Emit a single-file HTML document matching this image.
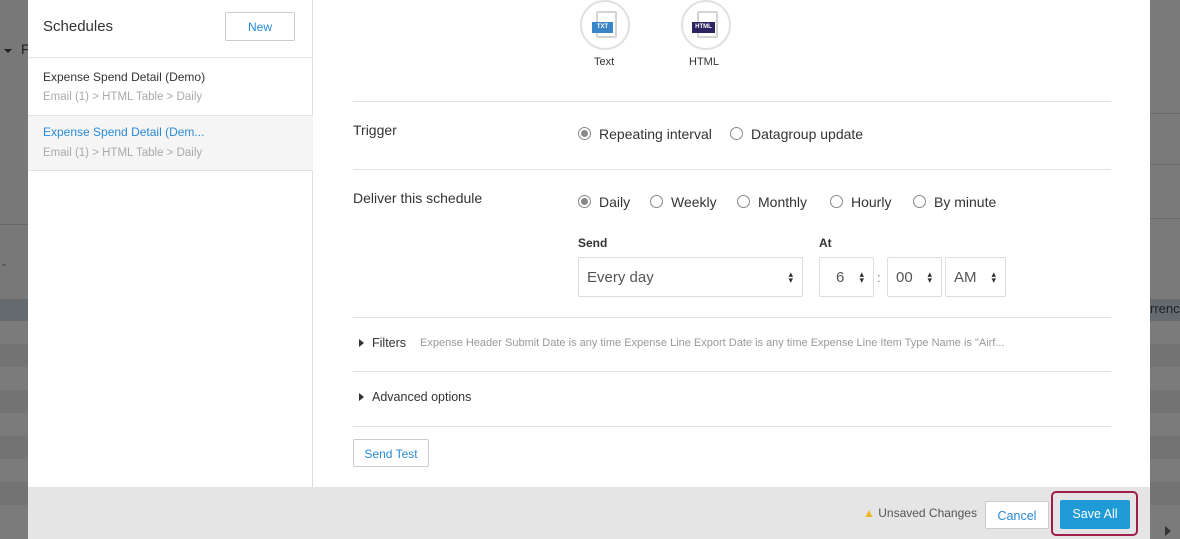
<!DOCTYPE html>
<html><head><style>
*{box-sizing:border-box;margin:0;padding:0}
body{width:1180px;height:539px;overflow:hidden;position:relative;background:#7a7a7a;font-family:"Liberation Sans",sans-serif;color:#333}
.abs{position:absolute}
.row{position:absolute;height:23px;width:1180px;left:0}
.modal{position:absolute;left:28px;top:0;width:1122px;height:539px;background:#fff}
.left{position:absolute;left:0;top:0;width:285px;height:487px;border-right:1px solid #ddd}
.foot{position:absolute;left:0;top:487px;width:1122px;height:52px;background:#e5e5e5}
.hr{position:absolute;left:325px;width:758px;height:1px;background:#e2e2e2}
.radio{position:absolute;width:13px;height:13px;border:1px solid #888;border-radius:50%;background:#fff}
.radio.on:after{content:"";position:absolute;left:2px;top:2px;width:7px;height:7px;border-radius:50%;background:#888}
.lbl{position:absolute;font-size:14px;color:#333;white-space:nowrap}
.sel{position:absolute;height:40px;border:1px solid #ddd;border-radius:2px;font-size:15px;color:#555;padding:11px 0 0 8px}
.ar{position:absolute;right:9px;top:13px;font-size:9px;line-height:6px;color:#333}
.btn{position:absolute;border:1px solid #ccc;border-radius:2px;background:#fff;color:#2a8ad8;font-size:12px;text-align:center}
</style></head><body>
<div class="abs" style="left:0;top:0;width:28px;height:300px;background:#787878"></div>
<div class="abs" style="left:0;top:224px;width:28px;height:1px;background:#6a6a6a"></div>
<div class="abs" style="left:4px;top:49px;width:0;height:0;border-left:4px solid transparent;border-right:4px solid transparent;border-top:4px solid #222"></div>
<div class="abs" style="left:21px;top:41px;font-size:14px;color:#222">F</div>
<div class="abs" style="left:0;top:258px;font-size:10px;color:#444">⌄</div>
<div class="abs" style="left:1150px;top:113px;width:30px;height:1px;background:#6a6a6a"></div>
<div class="abs" style="left:1150px;top:164px;width:30px;height:1px;background:#6a6a6a"></div>
<div class="abs" style="left:1150px;top:218px;width:30px;height:1px;background:#6a6a6a"></div>
<div class="row" style="top:299px;height:22px;background:#636a70"></div>
<div class="abs" style="left:1150px;top:301px;font-size:13px;color:#222;white-space:nowrap">rrenc</div>
<div class="row" style="top:321px;background:#7b7b7b"></div>
<div class="row" style="top:344px;background:#737373"></div>
<div class="row" style="top:367px;background:#7b7b7b"></div>
<div class="row" style="top:390px;background:#737373"></div>
<div class="row" style="top:413px;background:#7b7b7b"></div>
<div class="row" style="top:436px;background:#737373"></div>
<div class="row" style="top:459px;background:#7b7b7b"></div>
<div class="row" style="top:482px;background:#737373"></div>
<div class="row" style="top:505px;height:34px;background:#7b7b7b"></div>
<div class="abs" style="left:1165px;top:526px;width:0;height:0;border-top:5px solid transparent;border-bottom:5px solid transparent;border-left:6px solid #333"></div>

<div class="modal">
 <div class="left">
  <div class="abs" style="left:15px;top:18px;font-size:15px;color:#333">Schedules</div>
  <div class="btn" style="left:197px;top:12px;width:70px;height:29px;padding-top:7px;font-size:12px">New</div>
  <div class="abs" style="left:0;top:57px;width:285px;height:1px;background:#e2e2e2"></div>
  <div class="abs" style="left:15px;top:70px;font-size:12px;color:#333">Expense Spend Detail (Demo)</div>
  <div class="abs" style="left:15px;top:91px;font-size:11.5px;color:#aaa">Email (1) &gt; HTML Table &gt; Daily</div>
  <div class="abs" style="left:0;top:115px;width:285px;height:56px;background:#f5f5f5;border-top:1px solid #e2e2e2;border-bottom:1px solid #e2e2e2"></div>
  <div class="abs" style="left:15px;top:125px;font-size:12px;color:#2a8ad8">Expense Spend Detail (Dem...</div>
  <div class="abs" style="left:15px;top:147px;font-size:11.5px;color:#aaa">Email (1) &gt; HTML Table &gt; Daily</div>
 </div>
 <div class="abs" style="left:552px;top:0;width:50px;height:50px;border:2px solid #e0e0e0;border-radius:50%"></div>
 <div class="abs" style="left:568px;top:11px;width:21px;height:27px;border:2px solid #d4d4d4;border-radius:2px"></div>
 <div class="abs" style="left:564px;top:22px;width:21px;height:11px;background:#3a85c7;color:#fff;font-size:6px;font-weight:bold;text-align:center;line-height:11px">TXT</div>
 <div class="abs" style="left:566px;top:56px;font-size:11px;color:#333">Text</div>
 <div class="abs" style="left:653px;top:0;width:50px;height:50px;border:2px solid #e0e0e0;border-radius:50%"></div>
 <div class="abs" style="left:669px;top:11px;width:21px;height:27px;border:2px solid #d4d4d4;border-radius:2px"></div>
 <div class="abs" style="left:664px;top:22px;width:23px;height:11px;background:#2c2360;color:#fff;font-size:6px;font-weight:bold;text-align:center;line-height:11px">HTML</div>
 <div class="abs" style="left:661px;top:56px;font-size:11px;color:#333">HTML</div>

 <div class="hr" style="top:101px"></div>
 <div class="lbl" style="left:325px;top:122px">Trigger</div>
 <div class="radio on" style="left:550px;top:127px"></div><div class="lbl" style="left:571px;top:126px">Repeating interval</div>
 <div class="radio" style="left:702px;top:127px"></div><div class="lbl" style="left:723px;top:126px">Datagroup update</div>
 <div class="hr" style="top:169px"></div>
 <div class="lbl" style="left:325px;top:190px">Deliver this schedule</div>
 <div class="radio on" style="left:550px;top:195px"></div><div class="lbl" style="left:571px;top:194px">Daily</div>
 <div class="radio" style="left:622px;top:195px"></div><div class="lbl" style="left:643px;top:194px">Weekly</div>
 <div class="radio" style="left:709px;top:195px"></div><div class="lbl" style="left:730px;top:194px">Monthly</div>
 <div class="radio" style="left:802px;top:195px"></div><div class="lbl" style="left:823px;top:194px">Hourly</div>
 <div class="radio" style="left:885px;top:195px"></div><div class="lbl" style="left:906px;top:194px">By minute</div>
 <div class="abs" style="left:550px;top:236px;font-size:12px;font-weight:bold;color:#333">Send</div>
 <div class="abs" style="left:791px;top:236px;font-size:12px;font-weight:bold;color:#333">At</div>
 <div class="sel" style="left:550px;top:257px;width:225px">Every day<span class="ar">▴<br>▾</span></div>
 <div class="sel" style="left:791px;top:257px;width:55px;padding-left:16px">6<span class="ar">▴<br>▾</span></div>
 <div class="abs" style="left:849px;top:270px;font-size:13px;color:#777">:</div>
 <div class="sel" style="left:859px;top:257px;width:55px">00<span class="ar">▴<br>▾</span></div>
 <div class="sel" style="left:917px;top:257px;width:61px">AM<span class="ar">▴<br>▾</span></div>
 <div class="hr" style="top:317px"></div>
 <div class="abs" style="left:331px;top:339px;width:0;height:0;border-top:4px solid transparent;border-bottom:4px solid transparent;border-left:5px solid #333"></div>
 <div class="abs" style="left:344px;top:336px;font-size:12.5px;color:#333">Filters</div>
 <div class="abs" style="left:392px;top:337px;font-size:11px;color:#999;white-space:nowrap">Expense Header Submit Date is any time Expense Line Export Date is any time Expense Line Item Type Name is "Airf...</div>
 <div class="hr" style="top:371px"></div>
 <div class="abs" style="left:331px;top:393px;width:0;height:0;border-top:4px solid transparent;border-bottom:4px solid transparent;border-left:5px solid #333"></div>
 <div class="abs" style="left:344px;top:390px;font-size:12.5px;color:#333">Advanced options</div>
 <div class="hr" style="top:426px"></div>
 <div class="btn" style="left:325px;top:439px;width:76px;height:28px;padding-top:7px">Send Test</div>

 <div class="foot">
  <div class="abs" style="left:835px;top:19px;font-size:12px;color:#555;white-space:nowrap"><span style="color:#f0b429">▲</span> Unsaved Changes</div>
  <div class="btn" style="left:957px;top:14px;width:64px;height:28px;padding-top:7px;font-size:12.5px">Cancel</div>
  <div class="abs" style="left:1023px;top:4px;width:87px;height:45px;border:2px solid #a01e4a;border-radius:5px"></div>
  <div class="abs" style="left:1032px;top:13px;width:70px;height:29px;background:#1e9ad6;border-radius:2px;color:#fff;font-size:12.5px;text-align:center;padding-top:7px">Save All</div>
 </div>
</div>
</body></html>
